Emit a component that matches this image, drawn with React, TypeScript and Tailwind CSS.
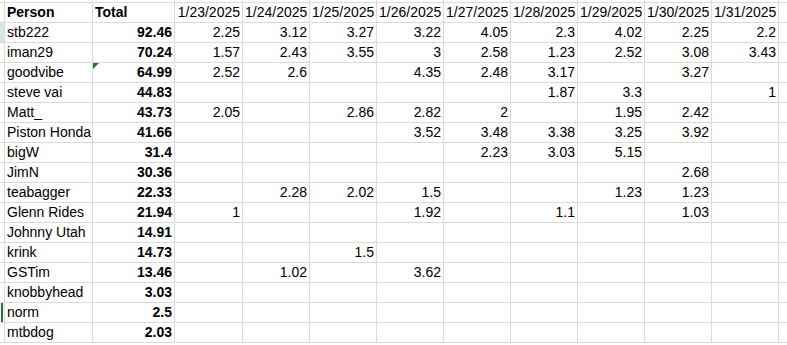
const DATES = ['1/23/2025', '1/24/2025', '1/25/2025', '1/26/2025', '1/27/2025', '1/28/2025', '1/29/2025', '1/30/2025', '1/31/2025']
const DATE_W = ['w-[68px]', 'w-[67px]', 'w-[67px]', 'w-[67px]', 'w-[67px]', 'w-[67px]', 'w-[67px]', 'w-[67px]', 'w-[67px]']

type Row = { name: string; total: string; vals: string[]; stub?: 'fill' | 'line'; flag?: boolean }

const rows: Row[] = [
  { name: 'stb222', total: '92.46', vals: ['2.25', '3.12', '3.27', '3.22', '4.05', '2.3', '4.02', '2.25', '2.2'], stub: 'fill' },
  { name: 'iman29', total: '70.24', vals: ['1.57', '2.43', '3.55', '3', '2.58', '1.23', '2.52', '3.08', '3.43'] },
  { name: 'goodvibe', total: '64.99', vals: ['2.52', '2.6', '', '4.35', '2.48', '3.17', '', '3.27', ''], flag: true },
  { name: 'steve vai', total: '44.83', vals: ['', '', '', '', '', '1.87', '3.3', '', '1'] },
  { name: 'Matt_', total: '43.73', vals: ['2.05', '', '2.86', '2.82', '2', '', '1.95', '2.42', ''] },
  { name: 'Piston Honda', total: '41.66', vals: ['', '', '', '3.52', '3.48', '3.38', '3.25', '3.92', ''] },
  { name: 'bigW', total: '31.4', vals: ['', '', '', '', '2.23', '3.03', '5.15', '', ''] },
  { name: 'JimN', total: '30.36', vals: ['', '', '', '', '', '', '', '2.68', ''] },
  { name: 'teabagger', total: '22.33', vals: ['', '2.28', '2.02', '1.5', '', '', '1.23', '1.23', ''] },
  { name: 'Glenn Rides', total: '21.94', vals: ['1', '', '', '1.92', '', '1.1', '', '1.03', ''] },
  { name: 'Johnny Utah', total: '14.91', vals: ['', '', '', '', '', '', '', '', ''] },
  { name: 'krink', total: '14.73', vals: ['', '', '1.5', '', '', '', '', '', ''] },
  { name: 'GSTim', total: '13.46', vals: ['', '1.02', '', '3.62', '', '', '', '', ''] },
  { name: 'knobbyhead', total: '3.03', vals: ['', '', '', '', '', '', '', '', ''] },
  { name: 'norm', total: '2.5', vals: ['', '', '', '', '', '', '', '', ''], stub: 'line' },
  { name: 'mtbdog', total: '2.03', vals: ['', '', '', '', '', '', '', '', ''] },
]

const cell = 'h-full shrink-0 border-r border-[#dadada] px-[2px] overflow-hidden whitespace-nowrap'

function Stub({ kind }: { kind?: 'fill' | 'line' }) {
  return (
    <div className={`h-full w-[5px] shrink-0 border-r border-[#dadada] ${kind === 'fill' ? 'bg-[#d3e9da]' : 'bg-white'}`}>
      {kind === 'line' && <div className="ml-[1px] h-full w-[2px] bg-[#217346]" />}
    </div>
  )
}

export default function App() {
  return (
    <div className="w-[787px] h-[345px] overflow-hidden bg-white text-black text-[14px] leading-[19px]" style={{ fontFamily: '"Liberation Sans", Arial, sans-serif' }}>
      {/* sliver of the row above */}
      <div className="flex h-[3px] border-b border-[#dadada]">
        <Stub />
        <div className={`${cell} w-[88px]`} />
        <div className={`${cell} w-[82px]`} />
        {DATES.map((d, i) => <div key={d} className={`${cell} ${DATE_W[i]}`} />)}
        <div className="flex-1" />
      </div>

      <div className="flex h-[20px] border-b border-[#dadada] font-bold">
        <Stub />
        <div className={`${cell} w-[88px]`}>Person</div>
        <div className={`${cell} w-[82px]`}>Total</div>
        {DATES.map((d, i) => <div key={d} className={`${cell} ${DATE_W[i]} text-right font-normal`}>{d}</div>)}
        <div className="flex-1" />
      </div>

      {rows.map(r => (
        <div key={r.name} className="flex h-[20px] border-b border-[#dadada]">
          <Stub kind={r.stub} />
          <div className={`${cell} w-[88px]`}>{r.name}</div>
          <div className={`${cell} w-[82px] relative text-right font-bold`}>
            {r.flag && (
              <svg className="absolute left-0 top-0" width="6" height="6" viewBox="0 0 6 6">
                <polygon points="0,0 6,0 0,6" fill="#1e7b1e" />
              </svg>
            )}
            {r.total}
          </div>
          {r.vals.map((v, i) => <div key={i} className={`${cell} ${DATE_W[i]} text-right`}>{v}</div>)}
          <div className="flex-1" />
        </div>
      ))}
    </div>
  )
}
